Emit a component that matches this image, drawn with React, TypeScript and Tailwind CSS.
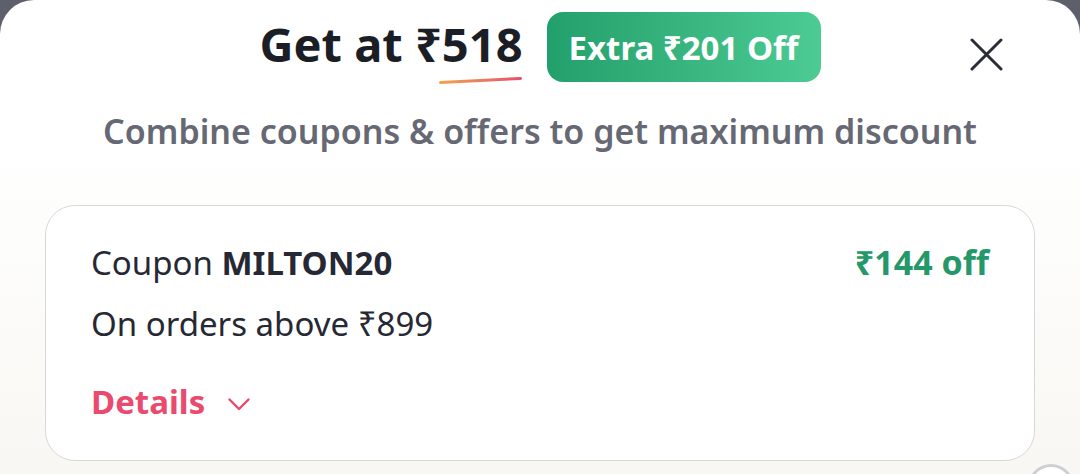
const font = { fontFamily: '"Noto Sans", Lato, sans-serif' };

export default function App() {
  return (
    <div className="w-[1080px] h-[474px] overflow-hidden bg-[#5d5f6a]" style={font}>
      <div className="relative h-full rounded-t-[34px] bg-gradient-to-b from-white from-30% to-[#f8f7f3] pt-3">
        {/* Header */}
        <div className="relative flex items-center justify-center h-[70px]">
          <div className="flex items-center gap-6">
            <h1 className="relative pb-[5px] text-[47px] font-bold text-[#1c1e26] leading-none">
              Get at ₹518
              <span className="absolute right-[1px] bottom-[-9px] h-[3px] w-[83px] rounded-full bg-gradient-to-r from-[#f0a34a] to-[#e64d6b] -rotate-[3deg]" />
            </h1>
            <div className="h-[70px] px-[22px] flex items-center rounded-[16px] bg-gradient-to-r from-[#22a06b] to-[#4ccb94]">
              <span className="text-[33px] font-bold text-white leading-none">Extra ₹201 Off</span>
            </div>
          </div>
          <button className="absolute right-[77px] top-[26px] w-[33px] h-[33px] flex items-center justify-center text-[#2a2c36]">
            <svg width="33" height="33" viewBox="0 0 33 33" fill="none" stroke="currentColor" strokeWidth="3" strokeLinecap="round">
              <path d="M2 2L31 31M31 2L2 31" />
            </svg>
          </button>
        </div>

        <p className="mt-[32px] text-center text-[34px] font-semibold text-[#666873] leading-none">
          Combine coupons &amp; offers to get maximum discount
        </p>

        {/* Coupon card */}
        <div className="mx-[45px] mt-[57px] h-[256px] rounded-[30px] border border-[#d8d8d8] bg-white px-[45px] pt-[39px]">
          <div className="flex items-baseline justify-between">
            <p className="text-[33px] text-[#262833] leading-none">
              Coupon <span className="font-bold">MILTON20</span>
            </p>
            <p className="text-[34px] font-bold text-[#25986a] leading-none">₹144 off</p>
          </div>
          <p className="mt-[28px] text-[33px] text-[#262833] leading-none">On orders above ₹899</p>
          <button className="mt-[45px] flex items-center gap-[23px] text-[#ea4a6e]">
            <span className="text-[33px] font-bold leading-none">Details</span>
            <svg className="mt-[6px]" width="22" height="13" viewBox="0 0 22 13" fill="none" stroke="currentColor" strokeWidth="2.4" strokeLinecap="round" strokeLinejoin="round">
              <path d="M1.5 1.5L11 11L20.5 1.5" />
            </svg>
          </button>
        </div>

        <div className="absolute right-[6px] bottom-[-36px] w-[46px] h-[46px] rounded-full border-[3px] border-[#cfcfd4] bg-white" />
      </div>
    </div>
  );
}
